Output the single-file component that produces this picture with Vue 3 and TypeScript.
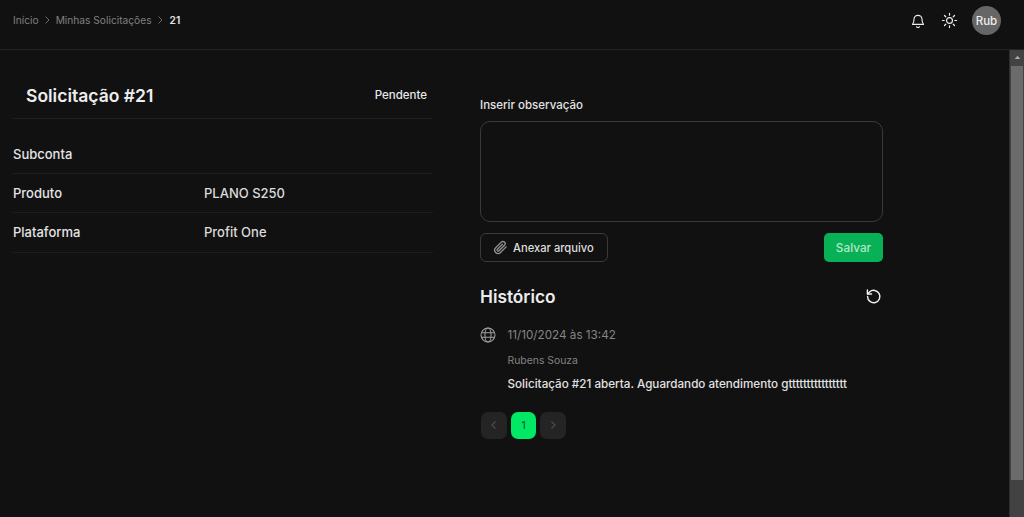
<script setup lang="ts">
const rows = [
  { label: 'Subconta', value: '' },
  { label: 'Produto', value: 'PLANO S250' },
  { label: 'Plataforma', value: 'Profit One' },
]
</script>

<template>
  <div class="page">
    <header class="top">
      <nav class="crumbs">
        <span>Início</span>
        <svg class="sep" viewBox="0 0 10 10"><path d="M3.500 1.500 7 5 3.500 8.500" /></svg>
        <span>Minhas Solicitações</span>
        <svg class="sep" viewBox="0 0 10 10"><path d="M3.500 1.500 7 5 3.500 8.500" /></svg>
        <span class="current">21</span>
      </nav>
      <div class="actions">
        <svg class="ico" viewBox="0 0 24 24"><path d="M6 9.500a6 6 0 0 1 12 0c0 5 1.300 6.500 2.300 7.500H3.700C4.700 16 6 14.500 6 9.500Z" /><path d="M10 20.500a2.200 2.200 0 0 0 4 0" /></svg>
        <svg class="ico sun" viewBox="0 0 24 24"><circle cx="12" cy="12" r="4.200" /><path d="M12 2v2.500M12 19.500V22M2 12h2.500M19.500 12H22M4.900 4.900l1.800 1.800M17.300 17.300l1.800 1.800M4.900 19.100l1.800-1.800M17.300 6.700l1.800-1.800" /></svg>
        <div class="avatar">Rub</div>
      </div>
    </header>
    <div class="body">
      <main class="content">
        <section class="left">
          <div class="head">
            <h1>Solicitação #21</h1>
            <span class="status">Pendente</span>
          </div>
          <dl class="rows">
            <div v-for="r in rows" :key="r.label" class="row">
              <dt>{{ r.label }}</dt>
              <dd>{{ r.value }}</dd>
            </div>
          </dl>
        </section>
        <section class="right">
          <label class="lbl" for="obs">Inserir observação</label>
          <textarea id="obs" class="area"></textarea>
          <div class="btns">
            <button class="attach">
              <svg viewBox="0 0 24 24"><path d="M21 11 12 20a5.400 5.400 0 0 1-7.700-7.700l8.900-8.900a3.600 3.600 0 0 1 5.200 5.100L9.700 17.200a1.800 1.800 0 0 1-2.600-2.500l8-8" /></svg>
              Anexar arquivo
            </button>
            <button class="save">Salvar</button>
          </div>
          <div class="hist-head">
            <h2>Histórico</h2>
            <svg class="reload" viewBox="0 0 24 24"><path d="M4.500 12a7.800 7.800 0 1 0 2.500-5.700L4.500 8.700" /><path d="M4.300 3.700v5.200h5.200" /></svg>
          </div>
          <div class="entry">
            <svg class="globe" viewBox="0 0 24 24"><circle cx="12" cy="12" r="10.500" /><ellipse cx="12" cy="12" rx="4.600" ry="10.500" /><path d="M2.500 8.500h19M2.500 15.500h19" /></svg>
            <div class="entry-body">
              <div class="date">11/10/2024 às 13:42</div>
              <div class="author">Rubens Souza</div>
              <div class="msg">Solicitação #21 aberta. Aguardando atendimento gtttttttttttttttt</div>
            </div>
          </div>
          <div class="pager">
            <button class="pg"><svg viewBox="0 0 10 10"><path d="M6.500 1.500 3 5l3.500 3.500" /></svg></button>
            <button class="pg on">1</button>
            <button class="pg"><svg viewBox="0 0 10 10"><path d="M3.500 1.500 7 5 3.500 8.500" /></svg></button>
          </div>
        </section>
      </main>
      <aside class="scroll">
        <svg class="arrow" viewBox="0 0 10 6"><path d="M5 0.500 9 5H1Z" /></svg>
        <div class="thumb"></div>
      </aside>
    </div>
  </div>
</template>

<style>
html, body { margin: 0; background: #111111; overflow: hidden; }
</style>

<style scoped>
.page {
  width: 1024px;
  height: 517px;
  display: flex;
  flex-direction: column;
  background: #111111;
  color: #ededed;
  font-family: Inter, "Liberation Sans", sans-serif;
}
.top {
  height: 50px;
  box-sizing: border-box;
  border-bottom: 1px solid #232323;
  display: flex;
  align-items: flex-start;
  justify-content: space-between;
  padding: 6px 23px 0 13px;
  flex: none;
}
.crumbs { display: flex; align-items: center; gap: 3.500px; height: 28px; font-size: 10.200px; color: #808080; }
.crumbs .current { color: #e6e6e6; font-weight: 600; margin-left: 1px; }
.sep { width: 10px; height: 10px; fill: none; stroke: #6a6a6a; stroke-width: 1; }
.actions { display: flex; align-items: center; }
.ico { width: 16px; height: 16px; fill: none; stroke: #ededed; stroke-width: 1.700; stroke-linecap: round; stroke-linejoin: round; }
.sun { margin-left: 15px; width: 17px; height: 17px; }
.avatar {
  margin-left: 14px;
  width: 29px;
  height: 29px;
  border-radius: 50%;
  background: #666666;
  color: #efefef;
  font-size: 11.500px;
  font-weight: 500;
  display: flex;
  align-items: center;
  justify-content: center;
}
.body { flex: 1; display: flex; min-height: 0; }
.content { flex: 1; display: flex; align-items: flex-start; min-width: 0; }
.left { width: 420px; margin: 22px 0 0 13px; flex: none; }
.head {
  height: 47px;
  box-sizing: border-box;
  border-bottom: 1px solid #1e1e1e;
  display: flex;
  align-items: center;
  justify-content: space-between;
  padding: 0 6px 0 13px;
}
h1 { margin: 0; font-size: 17.500px; font-weight: 600; color: #ededed; }
.status { font-size: 11.500px; font-weight: 500; color: #e8e8e8; }
.rows { margin: 15.500px 0 0; }
.row {
  height: 39.400px;
  box-sizing: border-box;
  border-bottom: 1px solid #1e1e1e;
  display: flex;
  align-items: center;
}
dt { width: 191px; font-size: 13px; font-weight: 500; color: #e4e4e4; }
dd { margin: 0; font-size: 13px; font-weight: 500; color: #dcdcdc; }
.right { width: 403px; margin: 47px 0 0 47px; flex: none; display: flex; flex-direction: column; }
.lbl { font-size: 11.500px; font-weight: 500; color: #e4e4e4; line-height: 16px; }
.area {
  margin-top: 8px;
  height: 101px;
  box-sizing: border-box;
  background: transparent;
  border: 1px solid #3a3a3a;
  border-radius: 10px;
  resize: none;
  outline: none;
  display: block;
}
.btns { margin-top: 11px; display: flex; justify-content: space-between; }
button { font-family: inherit; cursor: pointer; }
.attach {
  height: 29px;
  width: 128px;
  padding: 0 0 0 12px;
  background: transparent;
  border: 1px solid #3a3a3a;
  border-radius: 6px;
  color: #dedede;
  font-size: 11.200px;
  font-weight: 500;
  display: flex;
  align-items: center;
  gap: 5px;
}
.attach svg { width: 15px; height: 15px; fill: none; stroke: #8f8f8f; stroke-width: 2.200; stroke-linecap: round; stroke-linejoin: round; }
.save {
  width: 59px;
  height: 29px;
  background: #08b155;
  border: none;
  border-radius: 5px;
  color: #b4e6c9;
  font-size: 11.800px;
  font-weight: 500;
}
.hist-head {
  margin-top: 23px;
  height: 22px;
  display: flex;
  align-items: center;
  justify-content: space-between;
}
h2 { margin: 0; font-size: 17.300px; font-weight: 600; color: #ececec; }
.reload { width: 19px; height: 19px; margin: 1px 0 0 0; fill: none; stroke: #f0f0f0; stroke-width: 1.800; stroke-linecap: round; stroke-linejoin: round; }
.entry { margin-top: 20px; display: flex; }
.globe { width: 16px; height: 16px; flex: none; fill: none; stroke: #a0a0a0; stroke-width: 1.600; }
.entry-body { margin-left: 11.500px; }
.date { font-size: 11.700px; color: #858585; line-height: 16px; }
.author { margin-top: 11px; font-size: 10.400px; color: #838383; line-height: 14px; }
.msg { margin-top: 9px; font-size: 11.660px; font-weight: 500; color: #e2e2e2; line-height: 15px; }
.pager { margin-top: 20px; margin-left: 1.300px; display: flex; gap: 4px; }
.pg {
  width: 25.500px;
  height: 26.500px;
  padding: 0;
  border: none;
  border-radius: 7px;
  background: #242424;
  color: #056b32;
  font-size: 11px;
  font-weight: 500;
  display: flex;
  align-items: center;
  justify-content: center;
}
.pg.on { background: #00e864; }
.pg svg { width: 10px; height: 10px; fill: none; stroke: #4d4d4d; stroke-width: 1.200; }
.scroll {
  width: 15px;
  box-sizing: border-box;
  background: #424242;
  border-left: 1px solid #2e2e2e;
  display: flex;
  flex-direction: column;
  align-items: center;
  flex: none;
}
.arrow { width: 7px; height: 5px; margin-top: 5px; fill: #a8a8a8; flex: none; }
.thumb { margin-top: 6px; width: 12px; height: 414px; background: #6b6b6b; flex: none; }
</style>
